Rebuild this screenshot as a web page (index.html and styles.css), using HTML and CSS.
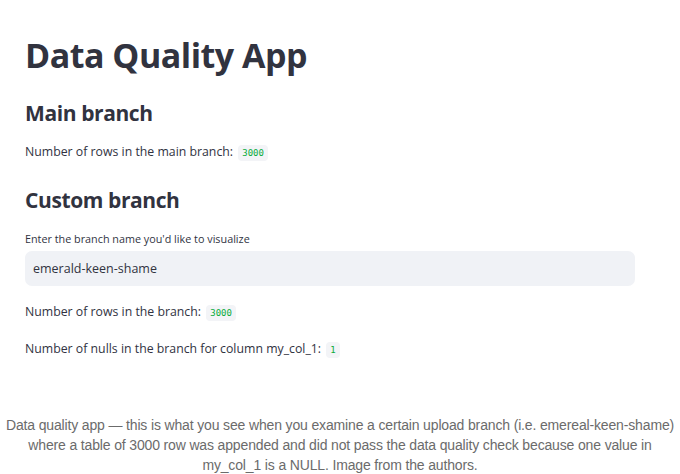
FILE: index.html
```html
<!DOCTYPE html>
<html>
<head>
<meta charset="utf-8">
<link rel="stylesheet" href="styles.css">
</head>
<body>
<main class="app">
  <h1 class="title">Data Quality App</h1>
  <h2 class="section">Main branch</h2>
  <p class="line">Number of rows in the main branch: <code class="badge">3000</code></p>
  <h2 class="section section-custom">Custom branch</h2>
  <label class="label">Enter the branch name you'd like to visualize</label>
  <div class="input">emerald-keen-shame</div>
  <p class="line line-rows">Number of rows in the branch: <code class="badge">3000</code></p>
  <p class="line line-nulls">Number of nulls in the branch for column my_col_1: <code class="badge">1</code></p>
</main>
<p class="caption">Data quality app — this is what you see when you examine a certain upload branch (i.e. emereal-keen-shame) where a table of 3000 row was appended and did not pass the data quality check because one value in my_col_1 is a NULL. Image from the authors.</p>
</body>
</html>
```
FILE: styles.css
```css
html, body { margin: 0; padding: 0; background: #fff; }
body { width: 680px; height: 474px; overflow: hidden; }
.app {
  padding: 0 45px 0 25px;
  color: #31333f;
  font-family: "Open Sans", sans-serif;
  display: flex;
  flex-direction: column;
  align-items: flex-start;
}
.title {
  margin: 33px 0 0;
  font-size: 34px;
  line-height: 44px;
  font-weight: 700;
  letter-spacing: -0.5px;
}
.section {
  margin: 0;
  font-size: 21px;
  line-height: 28px;
  font-weight: 700;
  letter-spacing: -0.4px;
}
.title + .section { margin-top: 22px; }
.section-custom { margin-top: 23px; }
.line {
  margin: 15px 0 0;
  font-size: 12.3px;
  line-height: 20px;
}
.badge {
  font-family: "DejaVu Sans Mono", monospace;
  font-size: 9px;
  color: #09ab3b;
  background: #f3f4f7;
  border-radius: 4px;
  padding: 3px 4px;
  margin-left: 2px;
}
.label {
  margin-top: 17px;
  font-size: 10.8px;
  line-height: 16px;
}
.input {
  margin-top: 4px;
  align-self: stretch;
  height: 35px;
  box-sizing: border-box;
  background: #f0f2f6;
  border-radius: 7px;
  padding: 0 8px;
  display: flex;
  align-items: center;
  font-size: 12.5px;
}
.line-rows { margin-top: 16px; }
.line-nulls { margin-top: 16px; }
.caption {
  margin: 55px 0 0;
  text-align: center;
  font-family: "Liberation Sans", Arial, sans-serif;
  font-size: 14px;
  line-height: 20px;
  color: #6b6b6b;
  letter-spacing: -0.15px;
  padding: 0 2px;
}
```
